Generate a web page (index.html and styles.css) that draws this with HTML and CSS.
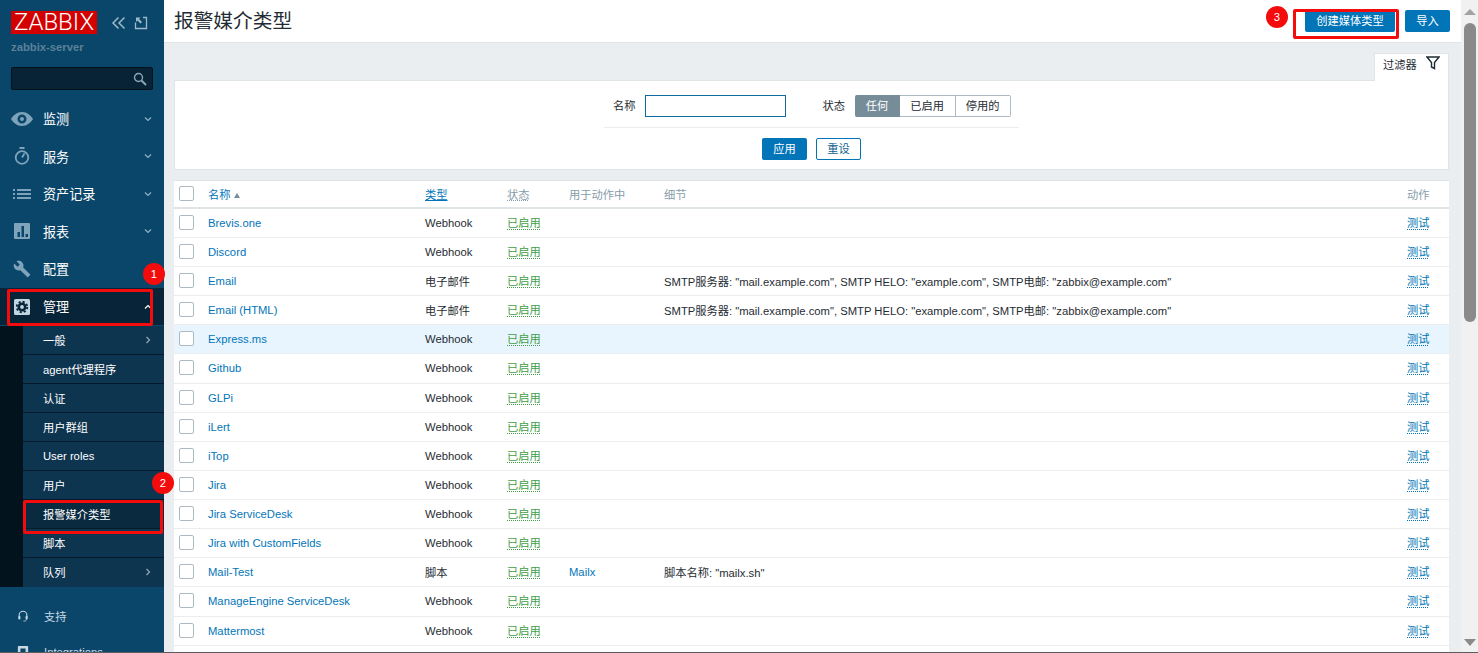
FILE: index.html
```html
<!DOCTYPE html>
<html lang="zh">
<head>
<meta charset="utf-8">
<title>报警媒介类型</title>
<link rel="stylesheet" href="styles.css">
</head>
<body>
<div class="app">
  <aside class="sidebar">
    <div class="brand">
      <span class="logo">ZABBIX</span>
      <svg class="tool-icon collapse" viewBox="0 0 16 16"><path d="M7.500 2.500 2 8l5.500 5.500M13.500 2.500 8 8l5.500 5.500" fill="none" stroke="currentColor" stroke-width="1.500"/></svg>
      <svg class="tool-icon expand" viewBox="0 0 14 14"><path d="M9 1.500h3.500v11h-11V6.500" fill="none" stroke="currentColor" stroke-width="1.300"/><path d="M2 1.500h4.500L5 3l3 3-1.500 1.500-3-3L2 6z" fill="currentColor"/></svg>
    </div>
    <div class="server">zabbix-server</div>
    <div class="search">
      <svg viewBox="0 0 14 14" class="search-icon"><circle cx="5.500" cy="5.500" r="4" fill="none" stroke="currentColor" stroke-width="1.400"/><path d="m8.500 8.500 4.500 4.500" stroke="currentColor" stroke-width="2"/></svg>
    </div>
    <nav class="nav">
      <a class="nav-item">
        <svg class="nav-icon" viewBox="0 0 22 14"><path fill-rule="evenodd" d="M11 0c5 0 9 3.500 11 7-2 3.500-6 7-11 7S2 10.500 0 7c2-3.500 6-7 11-7zm0 2.500a4.500 4.500 0 1 0 0 9 4.500 4.500 0 0 0 0-9zM11 5a2 2 0 1 1 0 4 2 2 0 0 1 0-4z" fill="currentColor"/></svg>
        <span class="nav-label">监测</span>
        <svg class="chev" viewBox="0 0 8 8"><path d="M1 2.500 4 5.500l3-3" fill="none" stroke="currentColor" stroke-width="1.200"/></svg>
      </a>
      <a class="nav-item">
        <svg class="nav-icon" viewBox="0 0 22 18"><circle cx="11" cy="10.500" r="6.300" fill="none" stroke="currentColor" stroke-width="1.800"/><path d="M8.500 1h5M11 10.500 13.500 6.500" stroke="currentColor" stroke-width="1.800" fill="none"/></svg>
        <span class="nav-label">服务</span>
        <svg class="chev" viewBox="0 0 8 8"><path d="M1 2.500 4 5.500l3-3" fill="none" stroke="currentColor" stroke-width="1.200"/></svg>
      </a>
      <a class="nav-item">
        <svg class="nav-icon" viewBox="0 0 22 14"><path d="M2 2h2v2H2zM2 6h2v2H2zM2 10h2v2H2zM6 2h14v2H6zM6 6h14v2H6zM6 10h14v2H6z" fill="currentColor"/></svg>
        <span class="nav-label">资产记录</span>
        <svg class="chev" viewBox="0 0 8 8"><path d="M1 2.500 4 5.500l3-3" fill="none" stroke="currentColor" stroke-width="1.200"/></svg>
      </a>
      <a class="nav-item">
        <svg class="nav-icon" viewBox="0 0 22 18"><path fill-rule="evenodd" d="M4 1h14a1 1 0 0 1 1 1v14a1 1 0 0 1-1 1H4a1 1 0 0 1-1-1V2a1 1 0 0 1 1-1zm2.500 9v5h2.500v-5zm4-6v11H13V4zm4 8v3H17v-3z" fill="currentColor"/></svg>
        <span class="nav-label">报表</span>
        <svg class="chev" viewBox="0 0 8 8"><path d="M1 2.500 4 5.500l3-3" fill="none" stroke="currentColor" stroke-width="1.200"/></svg>
      </a>
      <a class="nav-item">
        <svg class="nav-icon" viewBox="0 0 24 24"><path d="M22.700 19l-9.100-9.100c.9-2.300.4-5-1.500-6.900-2-2-5-2.400-7.400-1.300L9 6 6 9 1.600 4.700C.4 7.100.9 10.100 2.900 12.100c1.900 1.900 4.600 2.400 6.900 1.500l9.100 9.100c.4.4 1 .4 1.400 0l2.300-2.300c.5-.4.5-1.100.1-1.400z" fill="currentColor"/></svg>
        <span class="nav-label">配置</span>
      </a>
      <a class="nav-item nav-open">
        <svg class="nav-icon" viewBox="0 0 22 18"><rect x="3" y="1" width="16" height="16" rx="1.500" fill="currentColor"/><circle cx="11" cy="9" r="3.200" fill="none" stroke="#082438" stroke-width="2.600"/><circle cx="11" cy="9" r="5.300" fill="none" stroke="#082438" stroke-width="1.800" stroke-dasharray="2.160 2"/></svg>
        <span class="nav-label">管理</span>
        <svg class="chev" viewBox="0 0 8 8"><path d="M1 5.500 4 2.500l3 3" fill="none" stroke="currentColor" stroke-width="1.200"/></svg>
      </a>
      <div class="submenu">
        <a class="sub-item">一般<svg class="chev-r" viewBox="0 0 8 8"><path d="M2.500 1l3 3-3 3" fill="none" stroke="currentColor" stroke-width="1.200"/></svg></a>
        <a class="sub-item">agent代理程序</a>
        <a class="sub-item">认证</a>
        <a class="sub-item">用户群组</a>
        <a class="sub-item">User roles</a>
        <a class="sub-item">用户</a>
        <a class="sub-item sub-current">报警媒介类型</a>
        <a class="sub-item">脚本</a>
        <a class="sub-item sub-last">队列<svg class="chev-r" viewBox="0 0 8 8"><path d="M2.500 1l3 3-3 3" fill="none" stroke="currentColor" stroke-width="1.200"/></svg></a>
      </div>
    </nav>
    <div class="side-foot">
      <a class="foot-item">
        <svg class="foot-icon" viewBox="0 0 14 14"><path d="M2.500 8V6a4.500 4.500 0 0 1 9 0v2" fill="none" stroke="currentColor" stroke-width="1.300"/><rect x="1.500" y="7" width="2.500" height="4" rx="1" fill="currentColor"/><rect x="10" y="7" width="2.500" height="4" rx="1" fill="currentColor"/><path d="M11 11c0 1.500-1.500 2-3.500 2" fill="none" stroke="currentColor"/></svg>
        <span>支持</span>
      </a>
      <a class="foot-item">
        <svg class="foot-icon" viewBox="0 0 14 14"><path fill-rule="evenodd" d="M2 0h10a1 1 0 0 1 1 1v12a1 1 0 0 1-1 1H2a1 1 0 0 1-1-1V1a1 1 0 0 1 1-1zm2 3v5h6V3z" fill="currentColor"/></svg>
        <span>Integrations</span>
      </a>
    </div>
  </aside>

  <main class="main">
    <header class="topbar">
      <h1 class="title">报警媒介类型</h1>
      <div class="top-actions">
        <button class="btn btn-create">创建媒体类型</button>
        <button class="btn btn-import">导入</button>
      </div>
    </header>
    <div class="content">
      <div class="filter-tabs">
        <div class="filter-tab">过滤器
          <svg class="funnel" viewBox="0 0 14 14"><path d="M1 1h12L8.500 6.500v6L5.500 11V6.500z" fill="none" stroke="currentColor" stroke-width="1.400"/></svg>
        </div>
      </div>
      <section class="filter">
        <div class="filter-row">
          <label class="f-label">名称</label>
          <input class="f-input" type="text">
          <label class="f-label f-label-state">状态</label>
          <div class="seg">
            <span class="seg-item seg-on">任何</span>
            <span class="seg-item seg-mid">已启用</span>
            <span class="seg-item seg-end">停用的</span>
          </div>
        </div>
        <div class="filter-actions">
          <button class="btn btn-apply">应用</button>
          <button class="btn-ghost">重设</button>
        </div>
      </section>
      <table class="grid">
        <thead>
          <tr>
            <th class="c-check"><span class="box"></span></th>
            <th class="c-name"><a class="th-link">名称</a><span class="sort-arrow"></span></th>
            <th class="c-type"><a class="th-link th-under">类型</a></th>
            <th class="c-status"><a class="th-link th-status">状态</a></th>
            <th class="c-used">用于动作中</th>
            <th class="c-detail">细节</th>
            <th class="c-act">动作</th>
          </tr>
        </thead>
        <tbody>
          <tr><td class="c-check"><span class="box"></span></td><td><a class="link">Brevis.one</a></td><td>Webhook</td><td><a class="on">已启用</a></td><td></td><td></td><td><a class="test">测试</a></td></tr>
          <tr><td class="c-check"><span class="box"></span></td><td><a class="link">Discord</a></td><td>Webhook</td><td><a class="on">已启用</a></td><td></td><td></td><td><a class="test">测试</a></td></tr>
          <tr><td class="c-check"><span class="box"></span></td><td><a class="link">Email</a></td><td>电子邮件</td><td><a class="on">已启用</a></td><td></td><td>SMTP服务器: "mail.example.com", SMTP HELO: "example.com", SMTP电邮: "zabbix@example.com"</td><td><a class="test">测试</a></td></tr>
          <tr><td class="c-check"><span class="box"></span></td><td><a class="link">Email (HTML)</a></td><td>电子邮件</td><td><a class="on">已启用</a></td><td></td><td>SMTP服务器: "mail.example.com", SMTP HELO: "example.com", SMTP电邮: "zabbix@example.com"</td><td><a class="test">测试</a></td></tr>
          <tr class="hover"><td class="c-check"><span class="box"></span></td><td><a class="link">Express.ms</a></td><td>Webhook</td><td><a class="on">已启用</a></td><td></td><td></td><td><a class="test">测试</a></td></tr>
          <tr><td class="c-check"><span class="box"></span></td><td><a class="link">Github</a></td><td>Webhook</td><td><a class="on">已启用</a></td><td></td><td></td><td><a class="test">测试</a></td></tr>
          <tr><td class="c-check"><span class="box"></span></td><td><a class="link">GLPi</a></td><td>Webhook</td><td><a class="on">已启用</a></td><td></td><td></td><td><a class="test">测试</a></td></tr>
          <tr><td class="c-check"><span class="box"></span></td><td><a class="link">iLert</a></td><td>Webhook</td><td><a class="on">已启用</a></td><td></td><td></td><td><a class="test">测试</a></td></tr>
          <tr><td class="c-check"><span class="box"></span></td><td><a class="link">iTop</a></td><td>Webhook</td><td><a class="on">已启用</a></td><td></td><td></td><td><a class="test">测试</a></td></tr>
          <tr><td class="c-check"><span class="box"></span></td><td><a class="link">Jira</a></td><td>Webhook</td><td><a class="on">已启用</a></td><td></td><td></td><td><a class="test">测试</a></td></tr>
          <tr><td class="c-check"><span class="box"></span></td><td><a class="link">Jira ServiceDesk</a></td><td>Webhook</td><td><a class="on">已启用</a></td><td></td><td></td><td><a class="test">测试</a></td></tr>
          <tr><td class="c-check"><span class="box"></span></td><td><a class="link">Jira with CustomFields</a></td><td>Webhook</td><td><a class="on">已启用</a></td><td></td><td></td><td><a class="test">测试</a></td></tr>
          <tr><td class="c-check"><span class="box"></span></td><td><a class="link">Mail-Test</a></td><td>脚本</td><td><a class="on">已启用</a></td><td><a class="link">Mailx</a></td><td>脚本名称: "mailx.sh"</td><td><a class="test">测试</a></td></tr>
          <tr><td class="c-check"><span class="box"></span></td><td><a class="link">ManageEngine ServiceDesk</a></td><td>Webhook</td><td><a class="on">已启用</a></td><td></td><td></td><td><a class="test">测试</a></td></tr>
          <tr><td class="c-check"><span class="box"></span></td><td><a class="link">Mattermost</a></td><td>Webhook</td><td><a class="on">已启用</a></td><td></td><td></td><td><a class="test">测试</a></td></tr>
          <tr><td class="c-check"><span class="box"></span></td><td></td><td></td><td></td><td></td><td></td><td></td></tr>
        </tbody>
      </table>
    </div>
  </main>

  <div class="scrollbar">
    <span class="arrow-up"></span>
    <span class="thumb"></span>
    <span class="arrow-down"></span>
  </div>
</div>

<span class="mark mark-nav"></span>
<span class="mark mark-sub"></span>
<span class="mark mark-create"></span>
<span class="badge badge-1">1</span>
<span class="badge badge-2">2</span>
<span class="badge badge-3">3</span>
</body>
</html>
```
FILE: styles.css
```css
* { box-sizing: border-box; }
html, body { margin: 0; height: 653px; overflow: hidden; }
body {
  font-family: "Liberation Sans", "Noto Sans CJK SC", sans-serif;
  font-size: 11.25px;
  color: #1f2c33;
  background: #ebeef0;
  position: relative;
}
.app { display: flex; height: 653px; overflow: hidden; border-bottom: 1px solid #5c5c5c; }

/* sidebar */
.sidebar { width: 164px; flex: none; background: #0a466a; color: #fff; display: flex; flex-direction: column; overflow: hidden; }
.sidebar > * { flex: none; }
.brand { display: flex; align-items: center; padding: 11px 0 0 11px; height: 34px; }
.logo { width: 86px; height: 23px; background: #d40000; color: #fff; font-family: Roboto, "Liberation Sans", sans-serif; font-weight: 300; font-size: 24px; line-height: 23px; text-align: center; flex: none; }
.tool-icon { color: #9fb9c9; flex: none; }
.collapse { width: 16px; height: 16px; margin-left: 14px; }
.expand { width: 14px; height: 14px; margin-left: 7px; }
.server { color: #5b8199; font-size: 11.25px; font-weight: 700; padding: 7px 0 0 11px; height: 21px; line-height: 13px; }
.search { margin: 12px 0 0 11px; width: 142px; height: 23px; background: #072335; border: 1px solid #04121c; border-radius: 2px; position: relative; display: flex; justify-content: flex-end; align-items: center; padding-right: 5px; }
.search-icon { width: 14px; height: 14px; color: #8aa6b8; }
.nav { margin-top: 9.75px; }
.nav-item { display: flex; align-items: center; height: 37.6px; padding-left: 11px; position: relative; }
.nav-icon { width: 22px; height: 18px; color: #7ea3ba; flex: none; }
.nav-label { font-size: 13.1px; margin-left: 10px; flex: 1; }
.chev { width: 8px; height: 8px; color: #8fb0c4; margin-right: 12px; flex: none; }
.nav-open { background: #082438; }
.nav-open .nav-icon { color: #c2d6e2; }
.nav-open .chev { color: #fff; }
.submenu { background: #03131e; padding-left: 23px; margin-top: .25px; }
.sub-item { display: flex; align-items: center; justify-content: space-between; height: 29.06px; padding: 0 12px 0 20px; background: #0e3550; border-bottom: 1px solid #04192a; }
.sub-current { background: #0a2a40; }
.sub-last { border-bottom: 0; }
.chev-r { width: 8px; height: 8px; color: #8fa9ba; }
.side-foot { padding-top: 11px; }
.foot-item { display: flex; align-items: center; height: 36px; padding-left: 17px; color: #c8d8e2; }
.foot-icon { width: 12px; height: 12px; color: #c8d8e2; flex: none; margin-right: 15px; }

/* main */
.main { flex: 1; min-width: 0; display: flex; flex-direction: column; }
.topbar { height: 43px; background: #fff; border-bottom: 1px solid #dfe4e7; display: flex; justify-content: space-between; padding: 10px 11px 0 10px; flex: none; }
.title { margin: 0; font-size: 19.7px; font-weight: 400; line-height: 22px; color: #1f2c33; }
.top-actions { display: flex; gap: 10px; }
.btn { height: 22px; border: 0; border-radius: 2px; background: #0275b8; color: #fff; font: inherit; padding: 0 0 2px; }
.btn-create { width: 90px; }
.btn-import { width: 45px; }
.content { padding: 10px 12px 0 10px; flex: 1; overflow: hidden; }
.filter-tabs { display: flex; justify-content: flex-end; height: 27px; }
.filter-tab { width: 75px; height: 28px; background: #fff; border: 1px solid #dfe4e7; border-bottom: 0; display: flex; align-items: center; padding: 0 0 7px 8px; gap: 9px; color: #1f2c33; position: relative; z-index: 1; }
.funnel { width: 14px; height: 14px; color: #1f2c33; margin-top: -2px; }
.filter { height: 90px; background: #fff; border: 1px solid #dfe4e7; display: flex; flex-direction: column; align-items: center; padding-top: 14px; }
.filter-row { display: flex; align-items: center; width: 415px; height: 33px; padding: 0 0 11px 9px; border-bottom: 1px solid #ebeef0; }
.f-label { color: #1f2c33; padding-bottom: 2px; }
.f-input { width: 141px; height: 22px; margin-left: 9px; border: 1px solid #0f6a9e; background: #fff; padding: 0; }
.f-label-state { margin-left: 37px; }
.seg { display: flex; height: 22px; margin-left: 10px; }
.seg-item { display: flex; align-items: center; justify-content: center; border: 1px solid #acbbc3; border-left: 0; background: #fff; padding: 0 1px 2px 0; }
.seg-on { width: 45px; background: #768d99; border-color: #768d99; color: #fff; border-radius: 2px 0 0 2px; padding-right: 0; }
.seg-mid { width: 56px; }
.seg-end { width: 55px; border-radius: 0 2px 2px 0; }
.filter-actions { display: flex; gap: 9px; margin-top: 10px; }
.btn-apply { width: 45px; }
.btn-ghost { width: 45px; height: 22px; background: #fff; color: #0f5f8f; border: 1px solid #0275b8; border-radius: 2px; font: inherit; padding: 0 0 2px; }

/* table */
.grid { width: 1275px; margin-top: 10px; border-collapse: collapse; table-layout: fixed; background: #fff; border-top: 1px solid #dfe4e7; }
.grid th, .grid td { padding: 0; text-align: left; white-space: nowrap; font-weight: 400; border-bottom: 1px solid #ebeef0; height: 29.125px; }
.grid th { height: 27.75px; padding-bottom: 1px; border-bottom: 2px solid #dfe4e7; color: #869ca9; }
.c-check { width: 34px; padding-left: 5px !important; }
.c-name { width: 217px; }
.c-type { width: 82px; }
.c-status { width: 62px; }
.c-used { width: 95px; }
.c-detail { width: 743px; }
.c-act { width: 42px; }
.box { display: block; width: 15px; height: 15px; margin-bottom: 1px; border: 1px solid #acbbc3; border-radius: 2px; background: #fff; }
.th-link { color: #0275b8; }
.th-under { text-decoration: underline solid #0275b8 1px; text-underline-offset: 1px; }
.th-status { color: #869ca9; text-decoration: underline dotted #869ca9 1px; text-underline-offset: 1px; }
.sort-arrow { display: inline-block; margin-left: 3px; border: 3px solid transparent; border-top: 0; border-bottom: 5px solid #768d99; vertical-align: 1px; }
.link { color: #0275b8; }
.on { color: #429e47; text-decoration: underline dotted #429e47 1px; text-underline-offset: 2px; vertical-align: 3px; }
.test { color: #0275b8; text-decoration: underline dotted #0275b8 1px; text-underline-offset: 2px; vertical-align: 3px; }
.hover td { background: #e8f5ff; }

/* scrollbar */
.scrollbar { width: 17px; flex: none; background: #f1f1f1; position: relative; display: flex; flex-direction: column; align-items: center; }
.arrow-up { margin-top: 9px; border: 6.5px solid transparent; border-top: 0; border-bottom: 6px solid #a3a3a3; }
.thumb { width: 12px; height: 299px; margin-top: 8px; background: #8a8a8a; border-radius: 6px; }
.arrow-down { margin-top: auto; margin-bottom: 6px; border: 6.5px solid transparent; border-bottom: 0; border-top: 7px solid #8a8a8a; }

/* annotations drawn over the screenshot */
.mark { position: absolute; border: 3px solid #f40c0c; border-radius: 2px; pointer-events: none; }
.mark-nav { left: 7px; top: 289px; width: 146px; height: 37px; }
.mark-sub { left: 23px; top: 500px; width: 140px; height: 34px; }
.mark-create { left: 1293px; top: 9px; width: 106px; height: 30px; }
.badge { position: absolute; width: 22px; height: 22px; border-radius: 50%; background: #f40c0c; color: #fff; font-size: 11.25px; line-height: 22px; text-align: center; }
.badge-1 { left: 143px; top: 263px; }
.badge-2 { left: 152px; top: 472px; }
.badge-3 { left: 1266px; top: 6px; }
```
